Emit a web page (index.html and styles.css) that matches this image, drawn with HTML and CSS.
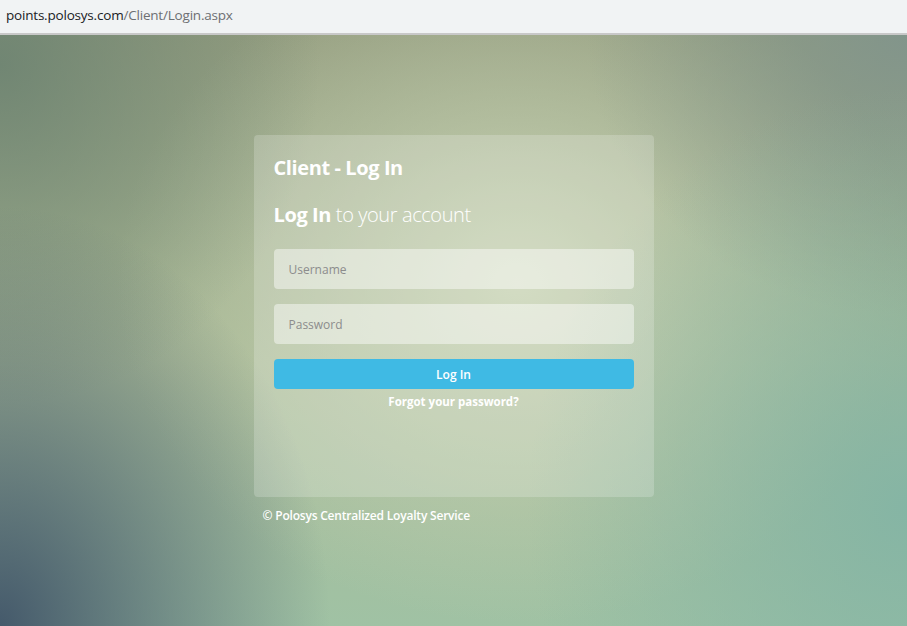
FILE: index.html
```html
<!DOCTYPE html>
<html lang="en">
<head>
    <meta charset="UTF-8">
    <meta name="viewport" content="width=device-width, initial-scale=1.0">
    <title>Client - Log In</title>
    <link rel="stylesheet" href="styles.css">
</head>
<body>
    <div class="address-bar">
        <span class="host">points.polosys.com</span><span class="path">/Client/Login.aspx</span>
    </div>

    <div class="page">
        <div class="login-box">
            <h3 class="box-title">Client - Log In</h3>
            <h3 class="form-title"><strong>Log In</strong> to your account</h3>

            <form class="login-form" onsubmit="return false;">
                <input type="text" class="form-input" placeholder="Username">
                <input type="password" class="form-input" placeholder="Password">
                <button type="submit" class="login-btn">Log In</button>
                <a href="#" class="forgot-link">Forgot your password?</a>
            </form>
        </div>

        <div class="copyright">&copy; Polosys Centralized Loyalty Service</div>
    </div>
</body>
</html>
```

FILE: styles.css
```css
* {
    margin: 0;
    padding: 0;
    box-sizing: border-box;
}

html, body {
    height: 100%;
}

body {
    font-family: 'Open Sans', 'Liberation Sans', sans-serif;
    display: flex;
    flex-direction: column;
    overflow: hidden;
}

.address-bar {
    height: 35px;
    background: #f1f3f4;
    border-bottom: 2px solid #c8c8c8;
    padding: 6px 0 0 6px;
    font-size: 13.5px;
    letter-spacing: -0.2px;
}

.address-bar .host {
    color: #202124;
}

.address-bar .path {
    color: #6d6f72;
}

.page {
    flex: 1;
    display: flex;
    flex-direction: column;
    align-items: center;
    padding-top: 100px;
    background:
        radial-gradient(ellipse 330px 420px at 0% 100%, rgba(64, 84, 104, 0.95), rgba(64, 84, 104, 0) 100%),
        radial-gradient(ellipse 320px 340px at 0% 5%, rgba(100, 125, 110, 0.75), rgba(100, 125, 110, 0) 100%),
        radial-gradient(ellipse 380px 420px at 100% 80%, rgba(130, 180, 165, 0.9), rgba(130, 180, 165, 0) 100%),
        radial-gradient(ellipse 320px 280px at 100% 0%, rgba(128, 148, 140, 0.9), rgba(128, 148, 140, 0) 100%),
        radial-gradient(ellipse 400px 340px at 57% 42%, #c8d3b4, rgba(200, 211, 180, 0) 100%),
        linear-gradient(180deg, #959e80 0%, #a8b996 55%, #a0c2a4 100%);
}

.login-box {
    width: 400px;
    height: 362px;
    padding: 20px;
    background: rgba(255, 255, 255, 0.2);
    border-radius: 4px;
    color: white;
}

.box-title {
    font-size: 20px;
    font-weight: 700;
    line-height: 26px;
    margin-bottom: 21px;
    letter-spacing: -0.4px;
}

.form-title {
    font-size: 20px;
    font-weight: 300;
    line-height: 26px;
    margin-bottom: 21px;
    letter-spacing: -0.4px;
}

.form-title strong {
    font-weight: 700;
}

.login-form {
    display: flex;
    flex-direction: column;
    gap: 15px;
}

.form-input {
    height: 40px;
    padding: 0 15px;
    border: none;
    border-radius: 4px;
    background: rgba(255, 255, 255, 0.45);
    font-family: inherit;
    font-size: 12px;
    color: #555;
    outline: none;
}

.form-input::placeholder {
    color: #8c8c8c;
}

.login-btn {
    height: 30px;
    border: none;
    border-radius: 4px;
    background: #3fbae4;
    color: white;
    font-family: inherit;
    font-size: 12px;
    font-weight: 600;
    cursor: pointer;
}

.forgot-link {
    margin-top: -10px;
    text-align: center;
    color: white;
    font-size: 11.5px;
    font-weight: 700;
    text-decoration: none;
}

.copyright {
    width: 400px;
    padding: 10px 9px;
    color: white;
    font-size: 12px;
    font-weight: 600;
    letter-spacing: -0.2px;
}
```
